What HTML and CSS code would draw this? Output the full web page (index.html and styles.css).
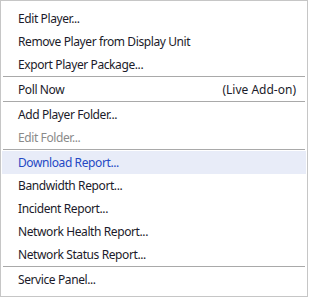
FILE: index.html
```html
<!DOCTYPE html>
<html lang="en">

<head>
    <meta charset="UTF-8">
    <meta name="viewport" content="width=device-width, initial-scale=1.0">
    <title>Player Menu</title>
    <link rel="stylesheet" href="styles.css">
</head>

<body>
    <div class="menu">
        <div class="menu-item">Edit Player...</div>
        <div class="menu-item">Remove Player from Display Unit</div>
        <div class="menu-item">Export Player Package...</div>
        <div class="separator"></div>
        <div class="menu-item">
            <span>Poll Now</span>
            <span class="shortcut">(Live Add-on)</span>
        </div>
        <div class="separator"></div>
        <div class="menu-item">Add Player Folder...</div>
        <div class="menu-item disabled">Edit Folder...</div>
        <div class="separator"></div>
        <div class="menu-item active">Download Report...</div>
        <div class="menu-item">Bandwidth Report...</div>
        <div class="menu-item">Incident Report...</div>
        <div class="menu-item">Network Health Report...</div>
        <div class="menu-item">Network Status Report...</div>
        <div class="separator"></div>
        <div class="menu-item">Service Panel...</div>
    </div>
</body>

</html>
```

FILE: styles.css
```css
body {
    margin: 0;
    padding: 0;
    background-color: #fff;
    font-family: "Noto Sans", Arial, sans-serif;
}

.menu {
    box-sizing: border-box;
    width: 308px;
    height: 297px;
    padding: 6px 0 4px 0;
    border: 1px solid #c6c6c6;
    background-color: #fff;
}

.menu-item {
    display: flex;
    justify-content: space-between;
    align-items: center;
    height: 23px;
    margin: 0 1px;
    padding: 0 10px 0 16px;
    font-size: 12px;
    letter-spacing: -0.4px;
    color: #1b1b2a;
}

.menu-item.disabled {
    color: #8a8a8a;
}

.menu-item.active {
    background-color: #e8ecf8;
    color: #2548c4;
}

.shortcut {
    letter-spacing: 0;
    color: #1b1b2a;
}

.separator {
    height: 1px;
    margin: 0 2px 1px 2px;
    background-color: #a9a9a9;
}
```
